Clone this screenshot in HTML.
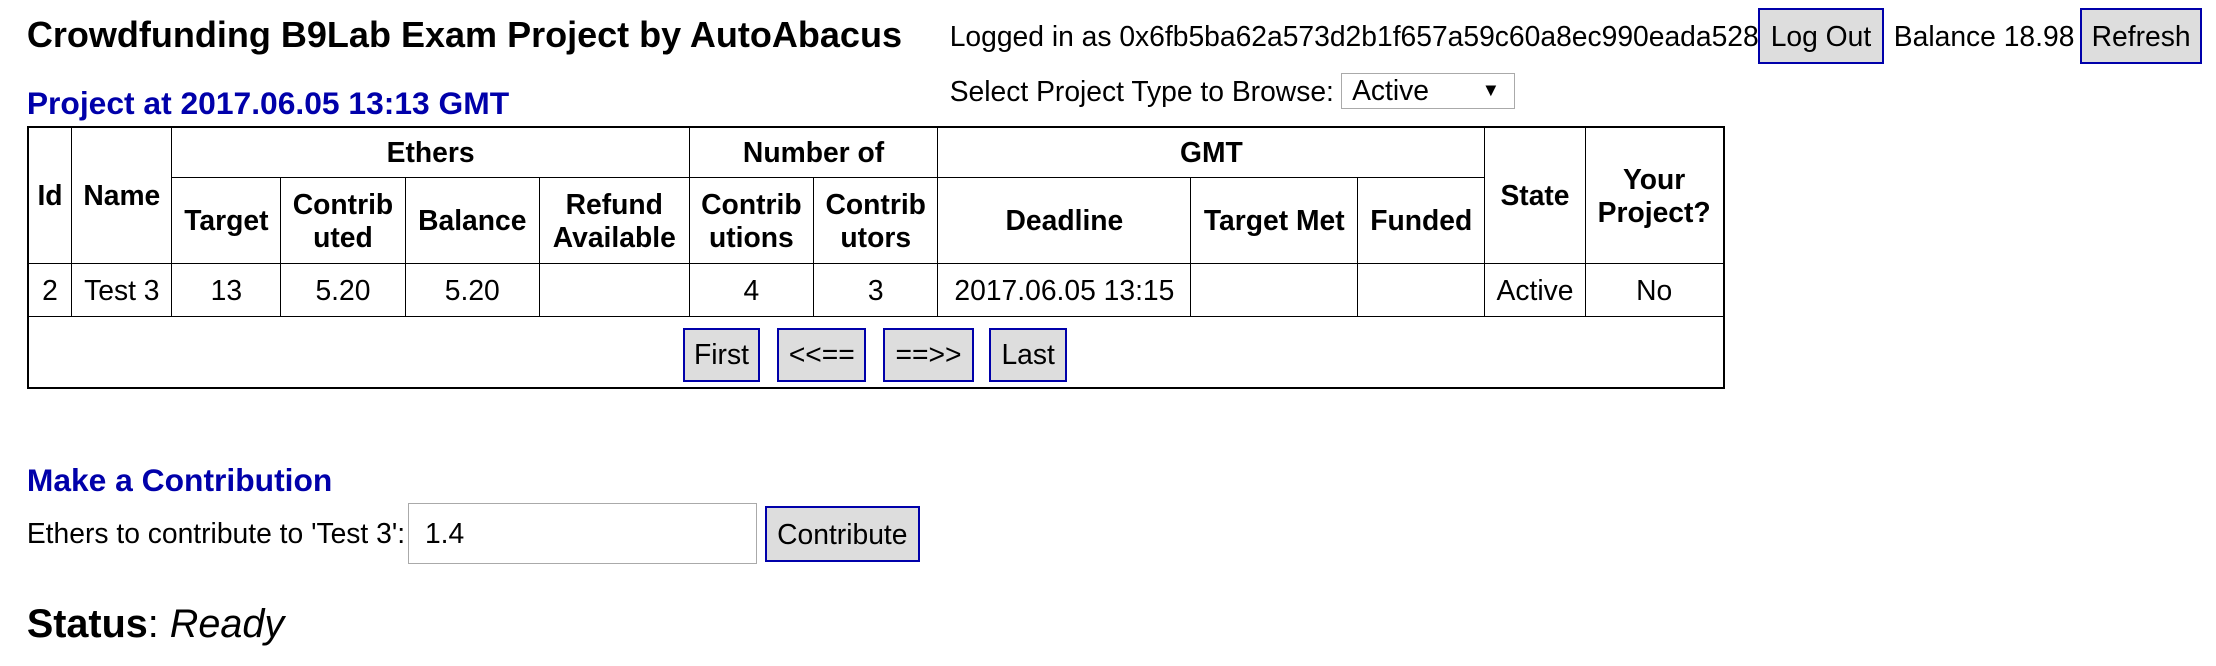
<!DOCTYPE html>
<html><head><meta charset="utf-8"><style>
html,body{margin:0;padding:0;background:#fff;}
body{width:1568px;height:471px;zoom:1.41327;position:relative;overflow:hidden;font-family:"Liberation Sans",Arial,sans-serif;font-size:20px;color:#000;}
.a{position:absolute;white-space:nowrap;}
.btn{position:absolute;background:#ddd;border:2px solid #0000aa;box-sizing:border-box;display:flex;align-items:center;justify-content:center;font-size:20px;}
.blue{color:#0000aa;font-weight:bold;font-size:22.5px;}
table{position:absolute;left:19px;top:89px;border-collapse:collapse;border:2px solid #000;}
td,th{border:1px solid #000;padding:0;text-align:center;font-size:20px;line-height:23px;white-space:nowrap;}
th{font-weight:bold;}
</style></head><body>
<div class="a" style="left:19px;top:10px;font-size:25.5px;font-weight:bold;">Crowdfunding B9Lab Exam Project by AutoAbacus</div>
<div class="a" style="left:672px;top:14px;">Logged in as 0x6fb5ba62a573d2b1f657a59c60a8ec990eada528</div>
<div class="btn" style="left:1244px;top:6px;width:89px;height:39px;">Log Out</div>
<div class="a" style="left:1340px;top:14px;">Balance 18.98</div>
<div class="btn" style="left:1472px;top:6px;width:86px;height:39px;">Refresh</div>
<div class="a" style="left:672px;top:53px;">Select Project Type to Browse:</div>
<div class="a" style="left:949px;top:52px;width:123px;height:25px;border:1px solid #aaa;box-sizing:border-box;"><span style="position:absolute;left:7px;top:0px;">Active</span><span style="position:absolute;right:10px;top:3px;font-size:13px;">▼</span></div>
<div class="a blue" style="left:19px;top:60px;">Project at 2017.06.05 13:13 GMT</div>
<table>
<colgroup><col style="width:31px"><col style="width:71px"><col style="width:77px"><col style="width:88px"><col style="width:95px"><col style="width:106px"><col style="width:88px"><col style="width:88px"><col style="width:179px"><col style="width:118px"><col style="width:90px"><col style="width:71px"><col style="width:98px"></colgroup>
<tr style="height:36px"><th rowspan="2">Id</th><th rowspan="2">Name</th><th colspan="4">Ethers</th><th colspan="2">Number of</th><th colspan="3">GMT</th><th rowspan="2">State</th><th rowspan="2">Your<br>Project?</th></tr>
<tr style="height:61px"><th>Target</th><th>Contrib<br>uted</th><th>Balance</th><th>Refund<br>Available</th><th>Contrib<br>utions</th><th>Contrib<br>utors</th><th>Deadline</th><th>Target Met</th><th>Funded</th></tr>
<tr style="height:37px"><td>2</td><td>Test 3</td><td>13</td><td>5.20</td><td>5.20</td><td></td><td>4</td><td>3</td><td>2017.06.05 13:15</td><td></td><td></td><td>Active</td><td>No</td></tr>
<tr style="height:51px"><td colspan="13"></td></tr>
</table>
<div class="btn" style="left:483px;top:232px;width:55px;height:38px;">First</div>
<div class="btn" style="left:550px;top:232px;width:63px;height:38px;">&lt;&lt;==</div>
<div class="btn" style="left:625px;top:232px;width:64px;height:38px;">==&gt;&gt;</div>
<div class="btn" style="left:700px;top:232px;width:55px;height:38px;">Last</div>
<div class="a blue" style="left:19px;top:327px;">Make a Contribution</div>
<div class="a" style="left:19px;top:366px;">Ethers to contribute to 'Test 3':</div>
<div class="a" style="left:289px;top:356px;width:247px;height:43px;border:1px solid #aaa;box-sizing:border-box;"><span style="position:absolute;left:11px;top:9px;">1.4</span></div>
<div class="btn" style="left:541px;top:358px;width:110px;height:40px;">Contribute</div>
<div class="a" style="left:19px;top:426px;font-size:28px;"><b>Status</b>: <i>Ready</i></div>
</body></html>
